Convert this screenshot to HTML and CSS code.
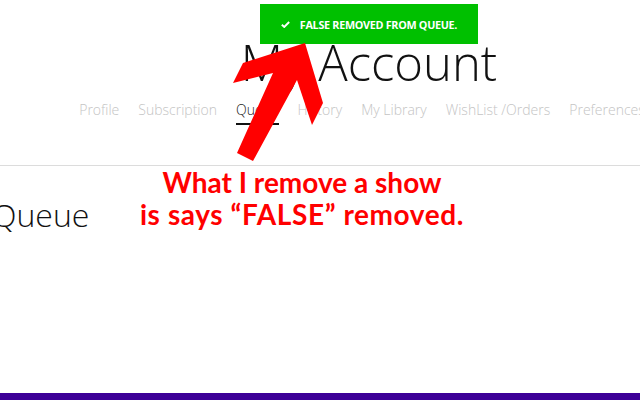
FILE: index.html
```html
<!DOCTYPE html>
<html>
<head>
<meta charset="utf-8">
<link rel="stylesheet" href="styles.css">
</head>
<body>
<div class="page">
  <header class="account-head">
    <h1 class="title">My Account</h1>
    <nav class="tabs">
      <a class="tab">Profile</a>
      <a class="tab">Subscription</a>
      <a class="tab active">Queue</a>
      <a class="tab">History</a>
      <a class="tab">My Library</a>
      <a class="tab">WishList /Orders</a>
      <a class="tab">Preferences</a>
    </nav>
  </header>
  <section class="content">
    <h2 class="section-title">Queue</h2>
  </section>
</div>
<footer class="footer-bar"></footer>

<div class="toast">
  <svg class="toast-icon" viewBox="0 0 10 8" width="9" height="7"><path d="M0.8 4.2 L3.6 6.8 L9.2 1.2" fill="none" stroke="#fff" stroke-width="2.2"/></svg>
  <span>FALSE REMOVED FROM QUEUE.</span>
</div>

<svg class="arrow" width="640" height="400" viewBox="0 0 640 400">
  <polygon fill="#ff0000" points="305,43 323,103 312,125 297,80 253,161 237,153 273,73 233,83 243,63"/>
</svg>

<div class="note"><span class="note-line">What I remove a show</span><span class="note-line wide">is says “FALSE” removed.</span></div>
</body>
</html>
```

FILE: styles.css
```css
html, body {
  margin: 0;
  padding: 0;
  background: #fff;
  width: 640px;
  height: 400px;
  overflow: hidden;
  font-family: "Open Sans", sans-serif;
}

.page {
  width: 770px;
  margin-left: -20px;
  height: 393px;
}

.account-head {
  padding-top: 34px;
  border-bottom: 1px solid #dcdcdc;
  height: 166px;
  box-sizing: border-box;
  display: flex;
  flex-direction: column;
  align-items: center;
}

.title {
  margin: 0 0 0 8px;
  font-size: 49px;
  line-height: 56px;
  font-weight: 300;
  color: #111;
}

.tabs {
  display: flex;
  gap: 19px;
  margin-top: 10px;
  margin-left: -6px;
}

.tab {
  font-size: 14px;
  font-weight: 300;
  color: #c4c4c4;
  line-height: 20px;
  padding-bottom: 3px;
  border-bottom: 2px solid transparent;
}

.tab.active {
  color: #222;
  border-bottom-color: #111;
}

.content {
  padding-left: 12px;
}

.section-title {
  margin: 0;
  padding-top: 29px;
  font-size: 32px;
  line-height: 40px;
  font-weight: 300;
  color: #111;
}

.footer-bar {
  height: 7px;
  background: #3d0097;
}

.toast {
  position: absolute;
  left: 260px;
  top: 4px;
  width: 218px;
  height: 40px;
  background: #00c000;
  display: flex;
  align-items: center;
  justify-content: center;
  gap: 10px;
  color: #fff;
  font-family: "Open Sans", sans-serif;
  font-weight: 700;
  font-size: 10.8px;
  letter-spacing: -0.3px;
}

.toast-icon {
  display: block;
}

.arrow {
  position: absolute;
  left: 0;
  top: 0;
  pointer-events: none;
}

.note {
  position: absolute;
  left: 100px;
  top: 166px;
  width: 404px;
  display: flex;
  flex-direction: column;
  align-items: center;
  color: #ff0000;
  font-family: Lato, sans-serif;
  font-weight: 700;
  font-size: 28px;
  line-height: 32px;
}

.note-line {
  white-space: nowrap;
}

.note-line.wide {
  letter-spacing: 0.6px;
}
```
